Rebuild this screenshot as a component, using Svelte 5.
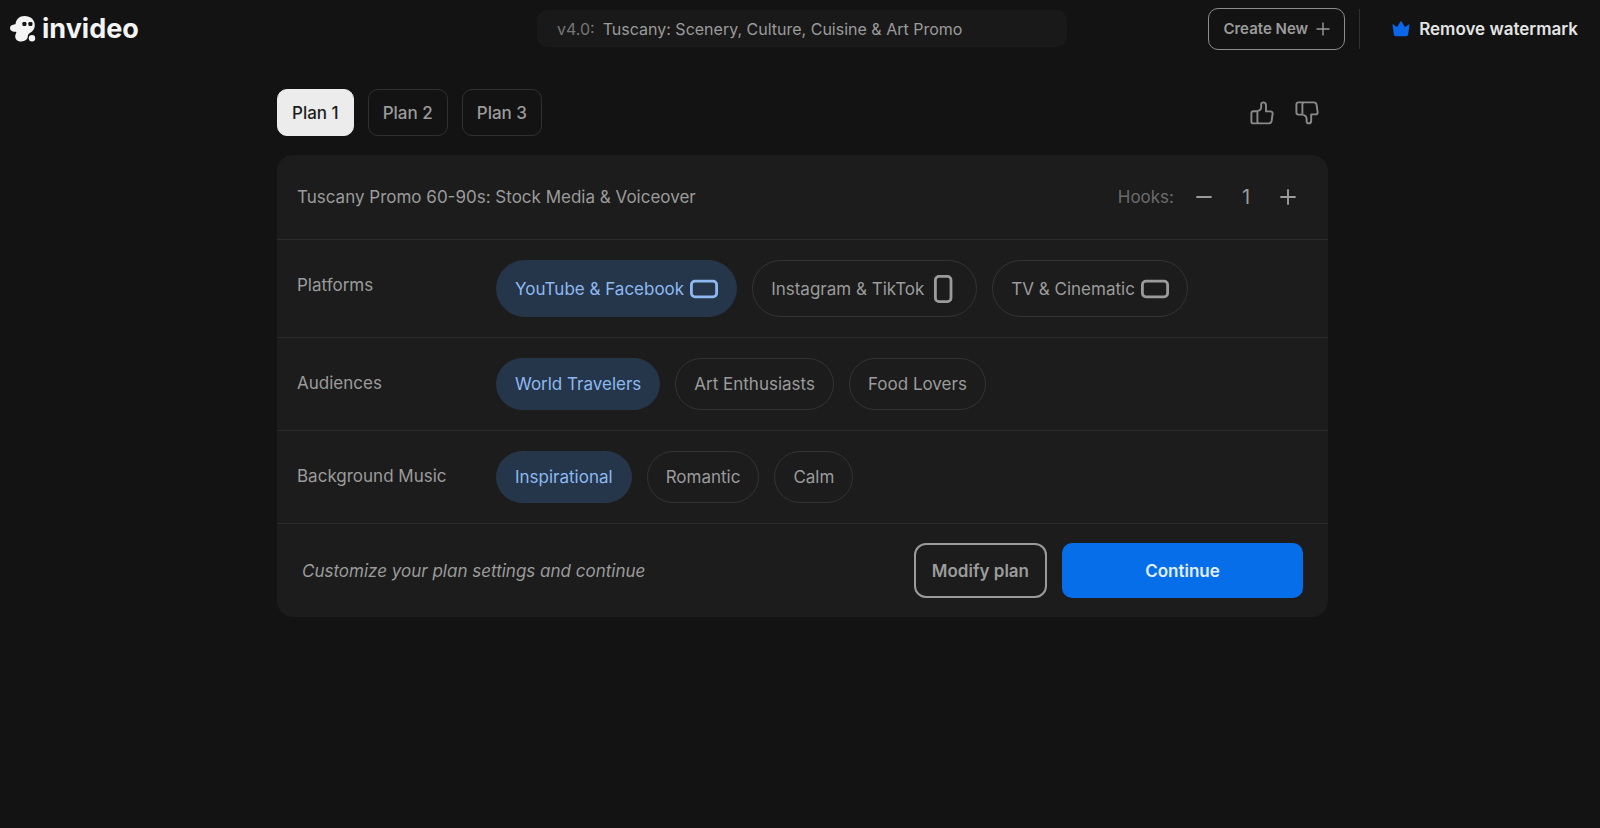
<script lang="ts">
type Option = { label: string; shape?: 'landscape' | 'portrait' }
type Setting = { name: string; options: Option[] }

const plans = ['Plan 1', 'Plan 2', 'Plan 3']

const settings: Setting[] = [
  {
    name: 'Platforms',
    options: [
      { label: 'YouTube & Facebook', shape: 'landscape' },
      { label: 'Instagram & TikTok', shape: 'portrait' },
      { label: 'TV & Cinematic', shape: 'landscape' },
    ],
  },
  {
    name: 'Audiences',
    options: [{ label: 'World Travelers' }, { label: 'Art Enthusiasts' }, { label: 'Food Lovers' }],
  },
  {
    name: 'Background Music',
    options: [{ label: 'Inspirational' }, { label: 'Romantic' }, { label: 'Calm' }],
  },
]

let title = $state('Tuscany: Scenery, Culture, Cuisine & Art Promo')
let activePlan = $state(0)
let selected = $state([0, 0, 0])
let hooks = $state(1)
</script>

<header class="topbar">
  <a class="logo" href="/" aria-label="invideo">
    <svg class="logo__mark" viewBox="0 0 26 26" aria-hidden="true">
      <path
        d="M14.6 0C9.4 0 6 3.4 5.6 7.8C5.3 8.5 4.6 8.7 3.4 8.7C1.4 8.8 0 10.3 0 12.1C0 14.2 1.6 15.7 3.7 15.7C4.8 15.7 5.6 15.4 6.2 16C6.9 16.7 5.2 18.1 5.2 20.4C5.2 23.4 7.8 25.4 11.3 25.4C15 25.4 17.7 23.2 17.8 20.2C17.9 18.2 19 17.6 20.6 16.5C23.2 14.8 24.8 12.4 24.8 9.2C24.8 3.9 20.6 0 14.6 0Z"
        fill="#f4f4f4"
      />
      <circle cx="22" cy="22.2" r="3.2" fill="#f4f4f4" />
      <rect x="12.4" y="6" width="4" height="4" rx="1.2" fill="#131313" />
      <rect x="18.4" y="6" width="4" height="4" rx="1.2" fill="#131313" />
    </svg>
    <span class="logo__name">invideo</span>
  </a>

  <div class="title">
    <label class="title__version" for="title">v4.0:</label>
    <input class="title__input" id="title" type="text" bind:value={title} />
  </div>

  <div class="actions">
    <button class="create" type="button">
      Create New
      <svg width="14" height="14" viewBox="0 0 14 14" aria-hidden="true">
        <path d="M7 1V13M1 7H13" stroke="currentColor" stroke-width="1.4" stroke-linecap="round" />
      </svg>
    </button>
    <a class="upgrade" href="/pricing">
      <svg width="18" height="16" viewBox="0 0 18 16" aria-hidden="true">
        <path
          d="M1 3.2L5 6L8.5 0.4Q9 -0.2 9.5 0.4L13 6L17 3.2Q17.6 3 17.5 3.8L16.2 13.2Q15.9 15.2 14 15.2H4Q2.1 15.2 1.8 13.2L0.5 3.8Q0.4 3 1 3.2Z"
          fill="#0b66e8"
        />
      </svg>
      Remove watermark
    </a>
  </div>
</header>

<main class="content">
  <div class="plans">
    {#each plans as plan, i}
      <button
        class="plan"
        class:plan--active={activePlan === i}
        type="button"
        aria-pressed={activePlan === i}
        onclick={() => (activePlan = i)}
      >{plan}</button>
    {/each}
    <div class="feedback">
      <button class="icon-button" type="button" aria-label="Good plan">
        <svg width="24" height="24" viewBox="0 0 24 24" aria-hidden="true">
          <path
            d="M7.4 10.2Q11.2 9.2 11.2 6V3.4Q11.4 1.4 13.4 1.4Q15.9 1.4 16 4.2V10.4H20.2Q23 10.4 22.6 13L21.6 20Q21.2 22.4 18.6 22.4H9.4Q7.4 22.4 7.4 20.4ZM7.4 10.2H3.4Q1.4 10.2 1.4 12.2V20.4Q1.4 22.4 3.4 22.4H9.4"
          />
        </svg>
      </button>
      <button class="icon-button" type="button" aria-label="Bad plan">
        <svg width="24" height="24" viewBox="0 0 24 24" aria-hidden="true">
          <path
            d="M7.4 13.6Q11.6 14.6 11.6 17.8V20.4Q11.8 22.4 13.8 22.4Q16.1 22.4 16.2 19.6V13.4H20.2Q23 13.4 22.6 10.8L21.6 3.8Q21.2 1.4 18.6 1.4H9.4Q7.4 1.4 7.4 3.4ZM7.4 13.6H3.4Q1.4 13.6 1.4 11.6V3.4Q1.4 1.4 3.4 1.4H9.4"
          />
        </svg>
      </button>
    </div>
  </div>

  <section class="panel">
    <div class="panel__header">
      <h1 class="panel__title">Tuscany Promo 60-90s: Stock Media & Voiceover</h1>
      <div class="hooks">
        <span class="hooks__label">Hooks:</span>
        <button class="icon-button" type="button" aria-label="Fewer hooks" onclick={() => (hooks = Math.max(1, hooks - 1))}>
          <svg width="16" height="16" viewBox="0 0 16 16" aria-hidden="true">
            <path d="M1 8H15" />
          </svg>
        </button>
        <output class="hooks__count">{hooks}</output>
        <button class="icon-button" type="button" aria-label="More hooks" onclick={() => hooks++}>
          <svg width="16" height="16" viewBox="0 0 16 16" aria-hidden="true">
            <path d="M8 1V15M1 8H15" />
          </svg>
        </button>
      </div>
    </div>

    {#each settings as setting, row}
      <div class="setting" role="group" aria-label={setting.name}>
        <div class="setting__name">{setting.name}</div>
        <div class="setting__options">
          {#each setting.options as option, i}
            <button
              class="chip"
              class:chip--active={selected[row] === i}
              class:chip--tall={option.shape}
              type="button"
              aria-pressed={selected[row] === i}
              onclick={() => (selected[row] = i)}
            >
              {option.label}
              {#if option.shape}
                <svg width="28" height="28" viewBox="0 0 28 28" aria-hidden="true">
                  {#if option.shape === 'portrait'}
                    <rect x="5.4" y="1.4" width="15.6" height="25.2" rx="3.6" />
                  {:else}
                    <rect x="1.4" y="6.2" width="25.2" height="15.6" rx="3.6" />
                  {/if}
                </svg>
              {/if}
            </button>
          {/each}
        </div>
      </div>
    {/each}

    <div class="panel__footer">
      <p class="hint">Customize your plan settings and continue</p>
      <button class="button" type="button">Modify plan</button>
      <button class="button button--primary" type="button">Continue</button>
    </div>
  </section>
</main>

<style>
  :global(body) {
    background: #131313;
    color: #9b9b9b;
    font-family: Inter, "Liberation Sans", sans-serif;
    font-size: 17px;
    line-height: 24px;
  }

  button,
  input {
    box-sizing: border-box;
    margin: 0;
    padding: 0;
    border: 0;
    background: none;
    color: inherit;
    font: inherit;
  }

  button {
    cursor: pointer;
  }

  svg {
    display: block;
    flex-shrink: 0;
    fill: none;
  }

  .topbar {
    display: grid;
    grid-template-columns: 1fr minmax(0, 530px) 1fr;
    align-items: center;
    height: 57px;
    padding: 0 6px 0 10px;
  }

  .logo {
    display: flex;
    align-items: center;
    gap: 6px;
    color: #f4f4f4;
    text-decoration: none;
  }

  .logo__mark {
    width: 26px;
    height: 26px;
  }

  .logo__name {
    font-size: 27px;
    font-weight: 700;
  }

  .title {
    display: flex;
    align-items: center;
    gap: 8px;
    height: 37px;
    padding: 0 20px;
    border-radius: 10px;
    background: #191919;
    font-size: 16px;
  }

  .title__version {
    color: #777;
  }

  .title__input {
    flex: 1;
    min-width: 0;
  }

  .actions {
    display: flex;
    align-items: center;
    justify-content: flex-end;
    white-space: nowrap;
  }

  .create {
    display: flex;
    align-items: center;
    gap: 8px;
    height: 42px;
    padding: 0 14px;
    border: 1px solid #8c8c8c;
    border-radius: 10px;
    font-size: 15px;
    font-weight: 600;
  }

  .upgrade {
    display: flex;
    align-items: center;
    gap: 9px;
    height: 40px;
    margin-left: 14px;
    padding: 0 16px 0 32px;
    border-left: 1px solid #303030;
    color: #e4e4e4;
    font-weight: 600;
    text-decoration: none;
  }

  .content {
    max-width: 1051px;
    margin: 0 auto;
    padding: 32px 0 0 5px;
  }

  .plans {
    display: flex;
    gap: 14px;
    margin-bottom: 19px;
  }

  .plan {
    height: 47px;
    padding: 0 14px;
    border: 1px solid #303030;
    border-radius: 10px;
    font-weight: 500;
  }

  .plan--active {
    border-color: #ececec;
    background: #ececec;
    color: #1c1c1c;
  }

  .feedback {
    display: flex;
    align-items: center;
    gap: 21px;
    margin-left: auto;
    padding-right: 9px;
    color: #8a8a8a;
  }

  .icon-button svg {
    stroke: currentColor;
    stroke-width: 1.9;
    stroke-linecap: round;
    stroke-linejoin: round;
  }

  .panel {
    border-radius: 16px;
    background: #1c1c1c;
  }

  .panel__header {
    display: flex;
    align-items: center;
    justify-content: space-between;
    padding: 30px 32px 30px 20px;
  }

  .panel__title {
    margin: 0;
    font-size: 17px;
    font-weight: 400;
  }

  .hooks {
    display: flex;
    align-items: center;
    gap: 22px;
  }

  .hooks__label {
    color: #6b6b6b;
  }

  .hooks__count {
    width: 24px;
    font-size: 20px;
    text-align: center;
  }

  .setting {
    display: grid;
    grid-template-columns: 199px 1fr;
    padding: 20px;
    border-top: 1px solid #2b2b2b;
  }

  .setting__name {
    line-height: 50px;
  }

  .setting__options {
    display: flex;
    flex-wrap: wrap;
    gap: 15px;
  }

  .chip {
    display: flex;
    align-items: center;
    gap: 6px;
    height: 52px;
    padding: 0 18px;
    border: 1px solid #333;
    border-radius: 30px;
  }

  .chip svg {
    stroke: currentColor;
    stroke-width: 2.8;
  }

  .chip--tall {
    height: 57px;
  }

  .chip--active {
    border-color: #25354a;
    background: #25354a;
    color: #8db9f0;
  }

  .panel__footer {
    display: flex;
    align-items: center;
    gap: 15px;
    padding: 19px 25px;
    border-top: 1px solid #2b2b2b;
  }

  .hint {
    flex: 1;
    margin: 0;
    font-style: italic;
  }

  .button {
    height: 55px;
    padding: 0 16px;
    border: 2px solid #9b9b9b;
    border-radius: 12px;
    font-weight: 600;
  }

  .button--primary {
    width: 241px;
    border-color: #066ee9;
    border-radius: 10px;
    background: #066ee9;
    color: #e1eefd;
  }
</style>
